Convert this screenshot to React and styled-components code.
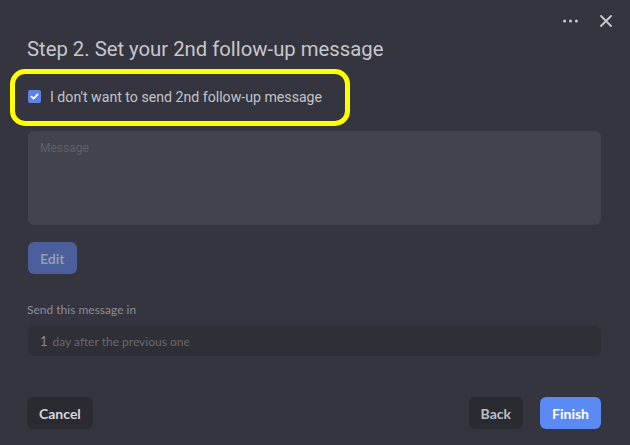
import React from "react";
import styled, { createGlobalStyle } from "styled-components";

const Global = createGlobalStyle`
  html, body {
    margin: 0;
    padding: 0;
    background: #34353e;
  }
  body {
    font-family: Roboto, "Liberation Sans", sans-serif;
  }
`;

const Dialog = styled.div`
  box-sizing: border-box;
  width: 630px;
  height: 445px;
  background: #34353e;
  padding: 10px 29px 0 27px;
  display: flex;
  flex-direction: column;
`;

const TopBar = styled.div`
  display: flex;
  justify-content: flex-end;
  align-items: center;
  gap: 22px;
  height: 22px;
  margin-right: -11px;
  color: #c9cad0;
`;

const IconBtn = styled.button`
  background: none;
  border: 0;
  padding: 0;
  display: flex;
  align-items: center;
  cursor: pointer;
  color: inherit;
`;

const Title = styled.h2`
  margin: 4px 0 0 0;
  font-weight: 400;
  font-size: 20.3px;
  line-height: 27px;
  color: #c6c7cc;
`;

const Highlight = styled.div`
  box-sizing: border-box;
  width: 340px;
  height: 57px;
  margin: 6px 0 0 -17px;
  border: 5px solid #ffff00;
  border-radius: 15px;
  display: flex;
  align-items: center;
  padding: 0 0 2px 13px;
  gap: 9px;
`;

const CheckBox = styled.span`
  width: 13px;
  height: 13px;
  border-radius: 2px;
  background: #5b82e8;
  display: flex;
  align-items: center;
  justify-content: center;
`;

const CheckLabel = styled.label`
  font-size: 14.15px;
  color: #c3c4c9;
`;

const MessageBox = styled.div`
  box-sizing: border-box;
  margin-top: 5px;
  margin-left: 1px;
  height: 94px;
  background: #42434c;
  border-radius: 6px;
  padding: 10px 12px;
  font-size: 12px;
  color: #5f606a;
`;

const Button = styled.button`
  box-sizing: border-box;
  height: 32px;
  padding: 0 12px;
  border: 0;
  border-radius: 6px;
  font-family: Lato, "Liberation Sans", sans-serif;
  font-weight: 700;
  font-size: 14px;
  background: ${(p) => p.$bg};
  color: ${(p) => p.$fg};
  cursor: pointer;
`;

const EditRow = styled.div`
  margin-top: 17px;
  margin-left: 1px;
  display: flex;
`;

const FieldLabel = styled.div`
  margin-top: 28px;
  font-family: Lato, "Liberation Sans", sans-serif;
  font-size: 12px;
  color: #8e8f98;
`;

const DelayInput = styled.div`
  box-sizing: border-box;
  margin-top: 9px;
  margin-left: 1px;
  height: 30px;
  background: #2e2f37;
  border-radius: 6px;
  display: flex;
  align-items: center;
  padding-left: 12px;
  gap: 5px;
  font-family: Lato, "Liberation Sans", sans-serif;
  font-size: 12px;
  color: #686973;
`;

const Num = styled.span`
  font-size: 13px;
  color: #8a8b94;
`;

const Footer = styled.div`
  margin-top: 41px;
  display: flex;
  align-items: center;
  gap: 17px;
`;

const Spacer = styled.div`
  flex: 1;
`;

export default function App() {
  return (
    <>
      <Global />
      <Dialog>
        <TopBar>
          <IconBtn aria-label="More">
            <svg width="15" height="4" viewBox="0 0 15 4">
              <circle cx="1.6" cy="2" r="1.5" fill="currentColor" />
              <circle cx="7.5" cy="2" r="1.5" fill="currentColor" />
              <circle cx="13.4" cy="2" r="1.5" fill="currentColor" />
            </svg>
          </IconBtn>
          <IconBtn aria-label="Close">
            <svg width="12" height="12" viewBox="0 0 12 12">
              <path d="M1 1L11 11M11 1L1 11" stroke="currentColor" strokeWidth="1.8" strokeLinecap="round" />
            </svg>
          </IconBtn>
        </TopBar>
        <Title>Step 2. Set your 2nd follow-up message</Title>
        <Highlight>
          <CheckBox>
            <svg width="9" height="9" viewBox="0 0 9 9">
              <path d="M1.5 4.6L3.6 6.6L7.6 2.4" stroke="#fff" strokeWidth="1.7" fill="none" strokeLinecap="round" strokeLinejoin="round" />
            </svg>
          </CheckBox>
          <CheckLabel>I don't want to send 2nd follow-up message</CheckLabel>
        </Highlight>
        <MessageBox>Message</MessageBox>
        <EditRow>
          <Button $bg="#4a5f9c" $fg="#979caf">Edit</Button>
        </EditRow>
        <FieldLabel>Send this message in</FieldLabel>
        <DelayInput>
          <Num>1</Num>
          <span>day after the previous one</span>
        </DelayInput>
        <Footer>
          <Button $bg="#2a2b31" $fg="#d6d6da">Cancel</Button>
          <Spacer />
          <Button $bg="#2a2b31" $fg="#bdbec3">Back</Button>
          <Button $bg="#5b8af5" $fg="#ffffff">Finish</Button>
        </Footer>
      </Dialog>
    </>
  );
}
